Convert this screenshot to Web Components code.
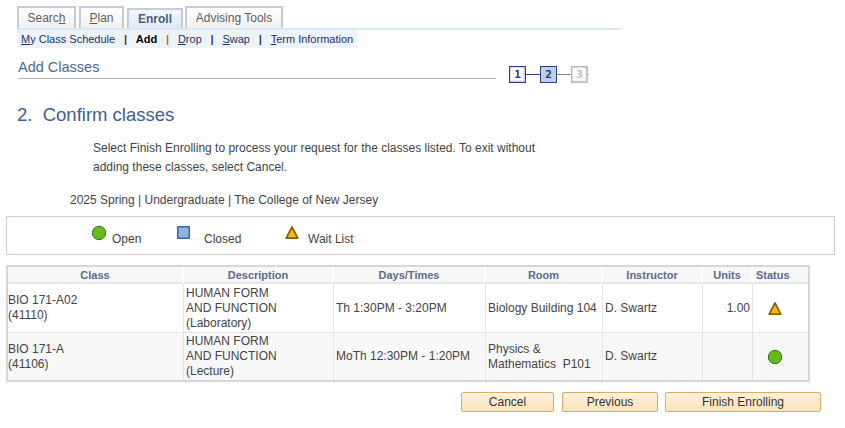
<!DOCTYPE html>
<html>
<head>
<meta charset="utf-8">
<title>Add Classes</title>
<style>
  html, body { margin: 0; padding: 0; background: #fff; }
  body { font: 12px/15px "Liberation Sans", Arial, sans-serif; color: #444; width: 845px; height: 428px; overflow: hidden; }
</style>
</head>
<body>
<enroll-tabs></enroll-tabs>
<enroll-subnav></enroll-subnav>
<page-heading title="Add Classes"></page-heading>
<confirm-intro></confirm-intro>
<status-legend></status-legend>
<class-grid></class-grid>
<action-bar></action-bar>

<script>
const ICONS = {
    open: `<svg width="16" height="16" viewBox="0 0 16 16"><circle cx="8" cy="8" r="6.7" fill="#6ab81c" stroke="#1f7a0c" stroke-width="1"/></svg>`,
    closed: `<svg width="14" height="14" viewBox="0 0 14 14"><rect x=".75" y=".75" width="11.5" height="11.5" fill="#8db4e8" stroke="#24478f" stroke-width="1.2"/></svg>`,
    wait: `<svg width="16" height="15" viewBox="0 0 16 15"><path d="M8 2 13.8 13.2H2.2Z" fill="#ffb800" stroke="#7a6412" stroke-width="1.7" stroke-linejoin="round"/></svg>`
};

class EnrollTabs extends HTMLElement {
    constructor() {
        super();
        this._shadowRoot = this.attachShadow({ mode: "open" });
    }

    connectedCallback() {
        this._shadowRoot.innerHTML = `
        <style>
            :host { display: block; padding: 6px 0 0 17px; width: 604px; }
            .row { display: flex; align-items: flex-end; gap: 3px; height: 22px; border-bottom: 2px solid #dbe6f2; }
            .tab {
                box-sizing: border-box;
                height: 22px;
                padding: 2px 0 0;
                border: 2px solid #c4ccd8;
                border-bottom: 0;
                background: linear-gradient(#fff, #f1f1f1);
                color: #5e5e5e;
                font-size: 12px;
                line-height: 16px;
                text-align: center;
                white-space: nowrap;
            }
            .tab.on {
                height: 20px;
                padding-top: 1px;
                background: linear-gradient(#f4f7fb, #dfe9f4);
                color: #4d5f7c;
                font-weight: bold;
            }
            u { text-underline-offset: 1px; }
        </style>
        <div class="row">
            <div class="tab" style="width:59px">Searc<u>h</u></div>
            <div class="tab" style="width:45px"><u>P</u>lan</div>
            <div class="tab on" style="width:56px">Enroll</div>
            <div class="tab" style="width:98px;margin-left:-1px">Advising Tools</div>
        </div>`;
    }
}

class EnrollSubnav extends HTMLElement {
    constructor() {
        super();
        this._shadowRoot = this.attachShadow({ mode: "open" });
    }

    connectedCallback() {
        this._shadowRoot.innerHTML = `
        <style>
            :host { display: block; margin-left: 17px; width: 341px; height: 18px; background: #edf4f9; }
            .row { display: flex; align-items: center; height: 18px; padding-left: 4px; font-size: 11px; color: #1c2f6b; white-space: nowrap; }
            b { color: #000; }
            i { font-style: normal; font-weight: bold; margin: 0 8.8px; color: #54361a; }
            u { text-underline-offset: 1px; }
        </style>
        <div class="row">
            <span><u>M</u>y Class Schedule</span><i>|</i>
            <b>Add</b><i style="color:#b36a1a">|</i>
            <span><u>D</u>rop</span><i style="color:#3a2a6a">|</i>
            <span><u>S</u>wap</span><i style="color:#3a2a6a">|</i>
            <span><u>T</u>erm Information</span>
        </div>`;
    }
}

class PageHeading extends HTMLElement {
    constructor() {
        super();
        this._shadowRoot = this.attachShadow({ mode: "open" });
    }

    connectedCallback() {
        this.title = this.getAttribute("title") || "";
        this.render();
    }

    box(n, cls) {
        return `<div class="box ${cls}"><span>${n}</span></div>`;
    }

    render() {
        this._shadowRoot.innerHTML = `
        <style>
            :host { display: flex; align-items: flex-start; padding: 10px 0 0 18px; height: 41px; box-sizing: content-box; }
            h2 {
                margin: 0;
                box-sizing: border-box;
                width: 478px;
                height: 21px;
                font-weight: normal;
                font-size: 14.5px;
                line-height: 18px;
                color: #4b6a92;
                border-bottom: 1px solid #b5b5b5;
            }
            .steps { display: flex; align-items: center; margin: 8px 0 0 13px; }
            .box {
                box-sizing: border-box;
                width: 17px;
                height: 17px;
                border: 1px solid #2f3f80;
                box-shadow: inset -1px -1px 2px #bbb, inset 1px 1px 1px #ddd;
                background: #fff;
                display: flex;
                align-items: center;
                justify-content: center;
                font: bold 11px/13px "DejaVu Sans Mono", monospace;
                color: #1f3378;
            }
            .box.now { background: #bcd0e4; box-shadow: none; }
            .box.off { border-color: #bbb; color: #bbb; }
            .line { width: 14px; height: 1px; background: #2f3f80; }
            .line.off { background: #888; }
            .line.end { width: 1px; background: #bbb; }
        </style>
        <h2>${this.title}</h2>
        <div class="steps">
            ${this.box(1, "")}
            <div class="line"></div>
            ${this.box(2, "now")}
            <div class="line off"></div>
            ${this.box(3, "off")}
            <div class="line end"></div>
        </div>`;
    }
}

class ConfirmIntro extends HTMLElement {
    constructor() {
        super();
        this._shadowRoot = this.attachShadow({ mode: "open" });
    }

    connectedCallback() {
        this._shadowRoot.innerHTML = `
        <style>
            :host { display: block; }
            h1 { margin: 5px 0 0 17px; font-weight: normal; font-size: 18.5px; line-height: 22px; color: #41608c; }
            p { margin: 13px 0 0 93px; width: 460px; line-height: 19px; color: #444; }
            .term { margin: 16px 0 0 70px; width: auto; line-height: 15px; }
        </style>
        <h1>2.&nbsp; Confirm classes</h1>
        <p>Select Finish Enrolling to process your request for the classes listed. To exit without adding these classes, select Cancel.</p>
        <p class="term">2025 Spring | Undergraduate | The College of New Jersey</p>`;
    }
}

class StatusLegend extends HTMLElement {
    constructor() {
        super();
        this._shadowRoot = this.attachShadow({ mode: "open" });
    }

    connectedCallback() {
        this._shadowRoot.innerHTML = `
        <style>
            :host {
                display: block;
                box-sizing: border-box;
                margin: 8px 0 0 6px;
                width: 829px;
                height: 39px;
                border: 1px solid #ccd0d6;
            }
            .row { display: flex; height: 37px; padding-left: 84px; }
            .item { display: flex; }
            .ico { display: block; margin-top: 8px; height: 16px; }
            span { margin-top: 15px; line-height: 15px; }
        </style>
        <div class="row">
            <div class="item" style="width:86px"><div class="ico">${ICONS.open}</div><span style="margin-left:5px">Open</span></div>
            <div class="item" style="width:107px"><div class="ico" style="margin-top:9px">${ICONS.closed}</div><span style="margin-left:13px">Closed</span></div>
            <div class="item"><div class="ico" style="margin-top:8px">${ICONS.wait}</div><span style="margin-left:8px">Wait List</span></div>
        </div>`;
    }
}

class ClassGrid extends HTMLElement {
    constructor() {
        super();
        this._shadowRoot = this.attachShadow({ mode: "open" });
    }

    connectedCallback() {
        const heads = ["Class", "Description", "Days/Times", "Room", "Instructor", "Units", "Status"];
        const rows = [
            ["BIO 171-A02<br>(41110)", "HUMAN FORM<br>AND FUNCTION<br>(Laboratory)", "Th 1:30PM - 3:20PM", "Biology Building 104", "D. Swartz", "1.00", ICONS.wait],
            ["BIO 171-A<br>(41106)", "HUMAN FORM<br>AND FUNCTION<br>(Lecture)", "MoTh 12:30PM - 1:20PM", "Physics &amp;<br>Mathematics&nbsp; P101", "D. Swartz", "", ICONS.open]
        ];
        const body = rows.map((r, i) => r.map((c, j) =>
            `<div class="cell ${i ? "alt" : ""} ${j == 0 ? "first" : ""} ${j == 5 ? "num" : ""} ${j == 6 ? "ico" : ""}">${c ? `<div>${c}</div>` : ""}</div>`).join("")).join("");
        this._shadowRoot.innerHTML = `
        <style>
            :host {
                display: block;
                box-sizing: border-box;
                margin: 10px 0 0 6px;
                width: 804px;
                height: 117px;
                border: 2px solid #d5d6da;
            }
            .grid {
                display: grid;
                grid-template-columns: 176px 150px 152px 117px 100px 50px 55px;
                grid-template-rows: 17px 49px 47px;
                background: #fff;
            }
            .head {
                background: #f7f7f7;
                border-right: 2px solid #fff;
                border-bottom: 2px solid #e5e5e5;
                font-size: 11px;
                font-weight: bold;
                line-height: 16px;
                color: #5b6b8a;
                text-align: center;
                box-sizing: border-box;
            }
            .head:nth-child(7) { text-align: left; padding-left: 3px; border-right: 0; }
            .cell {
                box-sizing: border-box;
                display: flex;
                align-items: center;
                padding: 0 2px;
                border-right: 1px solid #e4e4e4;
                border-bottom: 1px solid #e4e4e4;
                line-height: 15px;
            }
            .cell.first { padding-left: 0; }
            .alt { background: #f8f8f8; border-bottom: 0; }
            .num { justify-content: flex-end; }
            .ico { padding-left: 14px; border-right: 0; }
            .ico svg { display: block; }
        </style>
        <div class="grid">
            ${heads.map(h => `<div class="head">${h}</div>`).join("")}
            ${body}
        </div>`;
    }
}

class ActionBar extends HTMLElement {
    constructor() {
        super();
        this._shadowRoot = this.attachShadow({ mode: "open" });
    }

    connectedCallback() {
        this._shadowRoot.innerHTML = `
        <style>
            :host { display: flex; gap: 8px; margin: 10px 0 0 461px; }
            button {
                box-sizing: border-box;
                height: 20px;
                padding: 0;
                border: 1px solid #dfa76c;
                border-radius: 2px;
                background: linear-gradient(#fdf2d9, #fbe3bb);
                font: 12px/16px "Liberation Sans", Arial, sans-serif;
                color: #333;
            }
        </style>
        <button style="width:93px">Cancel</button>
        <button style="width:96px">Previous</button>
        <button style="width:156px;margin-left:-1px">Finish Enrolling</button>`;
    }
}

customElements.define("enroll-tabs", EnrollTabs);
customElements.define("enroll-subnav", EnrollSubnav);
customElements.define("page-heading", PageHeading);
customElements.define("confirm-intro", ConfirmIntro);
customElements.define("status-legend", StatusLegend);
customElements.define("class-grid", ClassGrid);
customElements.define("action-bar", ActionBar);
</script>
</body>
</html>
